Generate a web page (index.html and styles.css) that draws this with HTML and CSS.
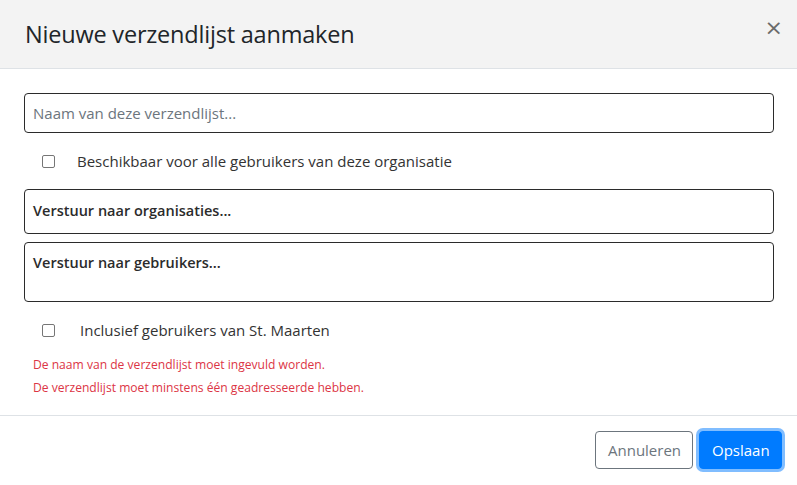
FILE: index.html
```html
<!DOCTYPE html>
<html lang="nl">
<head>
<meta charset="utf-8">
<link rel="stylesheet" href="styles.css">
</head>
<body>
<div class="modal">
  <div class="modal-header">
    <h5 class="modal-title">Nieuwe verzendlijst aanmaken</h5>
    <button class="close" type="button" aria-label="Sluiten">×</button>
  </div>
  <div class="modal-body">
    <div class="field field-name"><span class="placeholder">Naam van deze verzendlijst...</span></div>
    <label class="check check-first"><span class="box"></span><span class="check-label">Beschikbaar voor alle gebruikers van deze organisatie</span></label>
    <div class="field field-org"><span class="select-ph">Verstuur naar organisaties...</span></div>
    <div class="field field-users"><span class="select-ph">Verstuur naar gebruikers...</span></div>
    <label class="check check-second"><span class="box"></span><span class="check-label">Inclusief gebruikers van St. Maarten</span></label>
    <div class="errors">
      <div class="error">De naam van de verzendlijst moet ingevuld worden.</div>
      <div class="error">De verzendlijst moet minstens één geadresseerde hebben.</div>
    </div>
  </div>
  <div class="modal-footer">
    <button class="btn btn-cancel" type="button">Annuleren</button>
    <button class="btn btn-save" type="button">Opslaan</button>
  </div>
</div>
</body>
</html>
```
FILE: styles.css
```css
* { box-sizing: border-box; }
html, body { margin: 0; padding: 0; background: #fff; }
body {
  font-family: "Open Sans", "Noto Sans", sans-serif;
  color: #212529;
  width: 797px;
  height: 485px;
  overflow: hidden;
}
.modal { width: 797px; height: 485px; display: flex; flex-direction: column; }
.modal-header {
  height: 69px;
  background: #f3f3f3;
  border-bottom: 1px solid #dee2e6;
  display: flex;
  align-items: center;
  justify-content: space-between;
  padding: 0 14px 0 25px;
}
.modal-title {
  margin: 0;
  font-size: 23.5px;
  font-weight: 500;
  color: #212529;
  letter-spacing: -0.2px;
}
.close {
  border: 0;
  background: none;
  font-family: "DejaVu Sans", sans-serif;
  font-size: 22px;
  color: #6b6b6b;
  padding: 0;
  line-height: 1;
  margin-top: -12px;
}
.modal-body { padding: 24px 23px 0 24px; display: flex; flex-direction: column; }
.field {
  border: 1px solid #2b2b2b;
  border-radius: 4px;
  width: 750px;
  padding: 0 8px;
  font-size: 15px;
}
.field-name { height: 40px; display: flex; align-items: center; }
.placeholder { color: #6c757d; }
.field-org { height: 45px; margin-top: 14px; padding-top: 10px; }
.field-users { height: 60px; margin-top: 8px; padding-top: 9px; }
.select-ph { font-weight: 600; color: #2b2b2b; font-size: 14.5px; }
.check { display: flex; align-items: center; font-size: 15px; color: #333; }
.check-first { margin-top: 14px; padding-left: 18px; height: 28px; }
.check-second { margin-top: 14px; padding-left: 18px; height: 28px; }
.box {
  width: 13px; height: 13px;
  border: 1px solid #767676;
  border-radius: 2px;
  background: #fff;
  flex: none;
}
.check-first .check-label { margin-left: 22px; }
.check-second .check-label { margin-left: 25px; }
.errors { padding-left: 9px; margin-top: 9px; }
.error { color: #dc3545; font-size: 12.1px; line-height: 23px; }
.modal-footer {
  margin-top: auto;
  height: 70px;
  border-top: 1px solid #dee2e6;
  display: flex;
  justify-content: flex-end;
  align-items: center;
  gap: 6px;
  padding: 0 15px 2px 0;
}
.btn {
  font-family: inherit;
  font-size: 15px;
  height: 38px;
  border-radius: 4px;
  padding: 0 12px;
}
.btn-cancel { background: #fff; border: 1px solid #6c757d; color: #6c757d; width: 98px; }
.btn-save {
  background: #007bff;
  border: 1px solid #007bff;
  color: #fff;
  width: 83px;
  box-shadow: 0 0 0 3px #80bdff;
}
```
